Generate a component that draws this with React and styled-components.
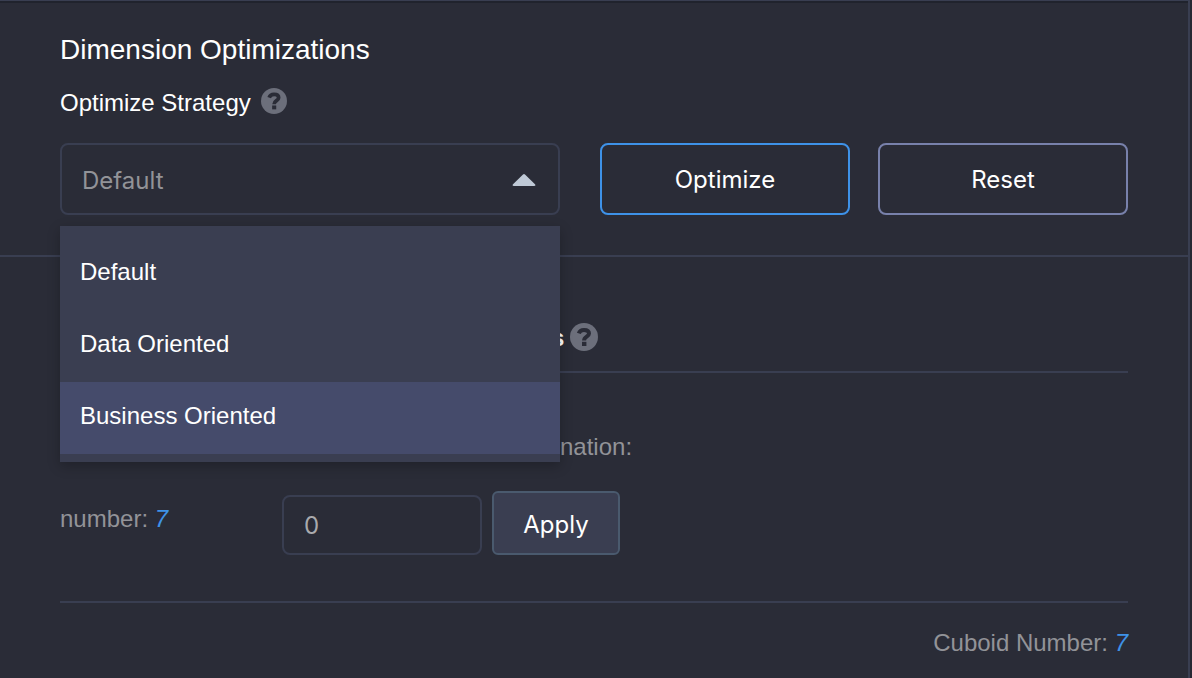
import React, { useState } from "react";
import styled, { createGlobalStyle } from "styled-components";

const colors = {
  page: "#2a2c37",
  line: "#393e51",
  menu: "#3a3e51",
  active: "#454b6b",
  blue: "#3e92e8",
  violet: "#7881ab",
  muted: "#929398",
  icon: "#6c6f7b",
};

const sans = `"Liberation Sans", Helvetica, Arial, sans-serif`;
const controlFont = `Inter, Roboto, sans-serif`;

const GlobalStyle = createGlobalStyle`
  *, *::before, *::after { box-sizing: border-box; }
  body {
    margin: 0;
    background: ${colors.page};
    color: #fff;
    font: 24px/32px ${sans};
  }
`;

const Panel = styled.main`
  min-height: 100vh;
  margin-right: 2px;
  border-top: 1px solid ${colors.line};
  border-right: 2px solid ${colors.line};
  box-shadow: inset 0 2px 0 #20232d, 2px 0 0 #262833;
`;

const Section = styled.section`
  padding: 32px 60px 40px;
  border-bottom: 2px solid ${colors.line};
`;

const Title = styled.h1`
  margin: 0 0 20px;
  font-size: 28px;
  font-weight: 400;
  line-height: 34px;
`;

const LabelRow = styled.div`
  display: flex;
  align-items: center;
  gap: 10px;
  margin-bottom: 24px;
`;

const HelpIcon = styled.svg`
  display: block;
  flex: none;
  width: ${(p) => p.$size}px;
  height: ${(p) => p.$size}px;
  margin-bottom: ${(p) => p.$lift}px;
`;

const Controls = styled.div`
  display: flex;
  gap: 40px;
  height: 72px;
`;

const Dropdown = styled.div`
  position: relative;
  flex: 500 1 0;
`;

const Actions = styled.div`
  display: grid;
  grid-template-columns: 1fr 1fr;
  gap: 28px;
  flex: 528 1 0;
`;

const Select = styled.select`
  appearance: none;
  width: 100%;
  height: 72px;
  padding: 4px 20px 0;
  border: 2px solid ${colors.line};
  border-radius: 8px;
  outline: 0;
  background: transparent;
  color: ${colors.muted};
  font: 24px/32px ${controlFont};
`;

const Caret = styled.svg`
  position: absolute;
  top: 30px;
  right: 24px;
  width: 24px;
  height: 14px;
  pointer-events: none;
`;

const Menu = styled.ul`
  position: absolute;
  z-index: 1;
  top: 83px;
  left: 0;
  right: 0;
  margin: 0;
  padding: 12px 0 8px;
  list-style: none;
  background: ${colors.menu};
  box-shadow: 0 4px 12px rgba(0, 0, 0, 0.24);
`;

const Option = styled.li`
  height: 72px;
  padding: 18px 20px;
  background: ${(p) => (p.$active ? colors.active : "transparent")};
  cursor: pointer;
`;

const Button = styled.button`
  padding: 2px 0 0;
  border: 2px solid ${(p) => p.$border};
  border-radius: 8px;
  background: transparent;
  color: #fff;
  font: 24px/32px ${controlFont};
  cursor: pointer;
`;

const ApplyButton = styled(Button)`
  width: 128px;
  height: 64px;
  padding-top: 4px;
  border-radius: 6px;
  background: ${colors.menu};
`;

const Details = styled.section`
  padding: 64px 60px 16px;
`;

const Heading = styled.h2`
  display: flex;
  align-items: center;
  gap: 6px;
  height: 52px;
  margin: 0;
  padding: 0 0 16px 491px;
  border-bottom: 2px solid ${colors.line};
  font-size: 24px;
  font-weight: 700;
  line-height: 32px;
`;

const FieldLabel = styled.label`
  display: block;
  margin: 58px 0 28px 500px;
  color: ${colors.muted};
`;

const NumberRow = styled.div`
  display: flex;
  align-items: flex-end;
  padding-bottom: 46px;
  border-bottom: 2px solid ${colors.line};
`;

const Count = styled.p`
  width: ${(p) => p.$width || "auto"};
  margin: 0;
  color: ${colors.muted};
  text-align: ${(p) => p.$align || "left"};
  align-self: center;
  padding-bottom: ${(p) => (p.$raised ? "8px" : "0")};
  em {
    color: ${colors.blue};
  }
`;

const NumberInput = styled.input`
  width: 200px;
  height: 60px;
  margin-right: 10px;
  padding: 0 20px;
  border: 2px solid ${colors.line};
  border-radius: 8px;
  outline: 0;
  background: transparent;
  color: #a9aaad;
  font: 24px/32px ${controlFont};
`;

const Summary = styled.footer`
  padding-top: 24px;
`;

function Help({ size, lift }) {
  return (
    <HelpIcon
      $size={size}
      $lift={lift}
      viewBox="0 0 28 28"
      aria-label="Help"
      role="img"
    >
      <circle cx="14" cy="14" r="14" fill={colors.icon} />
      <path
        d="M8.800 10.400C9.600 7.900 11.400 6.900 14 6.900c3.100 0 5 1.300 5 3.600 0 3.300-4.900 3-4.900 6.900"
        fill="none"
        stroke={colors.page}
        strokeWidth="4"
      />
      <rect x="12" y="18.800" width="4.400" height="4.200" fill={colors.page} />
    </HelpIcon>
  );
}

const strategies = ["Default", "Data Oriented", "Business Oriented"];

export default function App() {
  const [strategy, setStrategy] = useState("Default");
  const [hovered, setHovered] = useState("Business Oriented");
  const [limit, setLimit] = useState("0");

  return (
    <>
      <GlobalStyle />
      <Panel>
        <Section>
          <Title>Dimension Optimizations</Title>
          <LabelRow>
            <label htmlFor="strategy">Optimize Strategy</label>
            <Help size={26} lift={4} />
          </LabelRow>
          <Controls>
            <Dropdown>
              <Select
                id="strategy"
                value={strategy}
                onChange={(e) => setStrategy(e.target.value)}
              >
                {strategies.map((name) => (
                  <option key={name}>{name}</option>
                ))}
              </Select>
              <Caret viewBox="0 0 24 14" aria-hidden="true">
                <path
                  d="M11 1.400q1-1 2 0l10 9.800q1.200 1.800-1 1.800H2q-2.200 0-1-1.800z"
                  fill="#bfc9d6"
                />
              </Caret>
              <Menu role="listbox" aria-label="Optimize Strategy">
                {strategies.map((name) => (
                  <Option
                    key={name}
                    role="option"
                    aria-selected={name === strategy}
                    $active={name === hovered}
                    onMouseEnter={() => setHovered(name)}
                    onClick={() => setStrategy(name)}
                  >
                    {name}
                  </Option>
                ))}
              </Menu>
            </Dropdown>
            <Actions>
              <Button $border={colors.blue}>Optimize</Button>
              <Button $border={colors.violet}>Reset</Button>
            </Actions>
          </Controls>
        </Section>
        <Details>
          <Heading>
            s
            <Help size={28} lift={2} />
          </Heading>
          <FieldLabel htmlFor="limit">nation:</FieldLabel>
          <NumberRow>
            <Count $width="222px" $raised>
              number: <em>7</em>
            </Count>
            <NumberInput
              id="limit"
              value={limit}
              onChange={(e) => setLimit(e.target.value)}
            />
            <ApplyButton $border="#4a5a6e">Apply</ApplyButton>
          </NumberRow>
          <Summary>
            <Count $align="right">
              Cuboid Number: <em>7</em>
            </Count>
          </Summary>
        </Details>
      </Panel>
    </>
  );
}
